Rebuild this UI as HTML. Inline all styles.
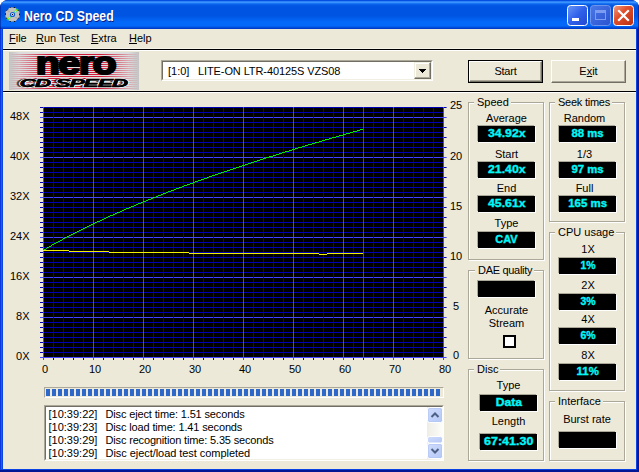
<!DOCTYPE html>
<html><head><meta charset="utf-8"><title>Nero CD Speed</title>
<style>
html,body{margin:0;padding:0;background:#fff;}
body{width:639px;height:472px;overflow:hidden;position:relative;font-family:"Liberation Sans",sans-serif;font-size:11px;color:#000;}
.win{position:absolute;left:0;top:0;width:639px;height:472px;background:#001694;border-radius:8px 8px 0 0;overflow:hidden;}
.title{position:absolute;left:0;top:0;width:639px;height:29px;background:linear-gradient(180deg,#0044da 0,#0a5ce6 1px,#3a92ff 1.7px,#3a92ff 2.6px,#1470f2 3.6px,#0459e4 5px,#0054e2 7px,#0054e2 16px,#0360f0 19px,#0468f8 22px,#0468f8 25.5px,#0058e6 27px,#0040d0 28px,#0036c4 29px);}
.title .cap{position:absolute;left:24px;top:8px;font-weight:bold;font-size:14px;line-height:16px;color:#fff;text-shadow:1px 1px 0 #0a1883;white-space:nowrap;transform-origin:0 0;transform:scaleX(0.88);}
.client{position:absolute;left:3px;top:29px;width:633px;height:440px;background:#ece9d8;}
.bl{position:absolute;left:0;top:29px;width:3px;height:441px;background:linear-gradient(90deg,#0a38da 0,#0a38da 1px,#1262ee 1px,#1262ee 2px,#0846e0 2px);}
.br{position:absolute;left:636px;top:29px;width:1px;height:441px;background:#0a44e2;}
.bb{position:absolute;left:1px;top:469px;width:636px;height:1px;background:#0a44e2;}
.abs,.t,.grp,.bx,.chk{position:absolute;}
.t{white-space:nowrap;line-height:13px;height:13px;}
.menu span{position:absolute;top:32px;line-height:13px;white-space:nowrap;}
u{text-decoration:underline;text-underline-offset:1px;}
.hl{position:absolute;left:3px;width:633px;height:1px;}
.graph{position:absolute;left:0;top:95px;}
.yl{left:0;width:29.5px;text-align:right;}
.yr{left:436px;width:40px;text-align:center;}
.xl{top:363px;width:40px;text-align:center;}
.grp{box-sizing:border-box;border:1px solid #aca899;box-shadow:1px 1px 0 #fff, inset 1px 1px 0 #fff;}
.gl{background:#ece9d8;padding:0 2px 0 3px;}
.cl{width:80px;text-align:center;}
.bx{background:#000;color:#00f8f8;-webkit-text-stroke:0.35px #00f8f8;font-weight:bold;font-size:11px;text-align:center;box-shadow:1px 1px 0 #fff,-1px -1px 0 #aca899;white-space:nowrap;}
.bx span{display:inline-block;}
.chk{width:13px;height:13px;box-sizing:border-box;border:2px solid #000;background:#fff;}
.btn{position:absolute;box-sizing:border-box;background:#ece9d8;text-align:center;line-height:13px;}
.prog{position:absolute;left:44px;top:387px;width:400px;height:11px;box-sizing:border-box;border:1px solid;border-color:#aca899 #fff #fff #aca899;}
.prog i{position:absolute;top:1px;width:4px;height:7px;background:#2e68c8;}
.log{position:absolute;left:44px;top:405px;width:400px;height:56px;box-sizing:border-box;background:#fff;border:1px solid;border-color:#aca899 #fff #fff #aca899;}
.log .in{position:absolute;left:0;top:0;right:0;bottom:0;border:1px solid;border-color:#716f64 #f1efe2 #f1efe2 #716f64;}
.log .ln{position:absolute;left:3.5px;white-space:nowrap;line-height:13px;}
.log .ln b{font-weight:normal;position:absolute;left:57px;}
</style></head><body>
<div class="win">
<div class="title">
<svg class="abs" style="left:5px;top:7px" width="15" height="15" viewBox="0 0 15 15">
<polygon points="4.8,0.5 10.2,0.5 14.5,4.8 14.5,10.2 10.2,14.5 4.8,14.5 0.5,10.2 0.5,4.8" fill="#c2c0be"/>
<polygon points="4.8,0.5 10.2,0.5 14.5,4.8 14.5,10.2 10.2,14.5 4.8,14.5 0.5,10.2 0.5,4.8" fill="none" stroke="#111" stroke-width="1" stroke-dasharray="1.6 3.1" stroke-dashoffset="0.8"/>
<path d="M2.300 12.700 L5.800 9.200 M12.700 2.300 L9.200 5.800" stroke="#18d8e0" stroke-width="2.300"/><path d="M2.300 12.700 L5.400 9.600 M12.700 2.300 L9.600 5.400" stroke="#f4f400" stroke-width="1.300"/><path d="M2.100 12.900 L3.300 11.700 M12.900 2.100 L11.700 3.300" stroke="#10d818" stroke-width="1.800"/>
<path d="M3 3.500 L4.500 5 M12 11.500 L10.500 10" stroke="#8a8a88" stroke-width="0.7"/>
<circle cx="7.500" cy="7.500" r="2.600" fill="#0c5ce0"/><circle cx="7.500" cy="7.500" r="1.400" fill="#f4f4f4"/><circle cx="7.500" cy="7.500" r="0.700" fill="#000"/>
</svg>
<div class="abs" style="left:0;top:0;width:1px;height:29px;background:rgba(0,10,120,0.45)"></div><div class="abs" style="left:638px;top:0;width:1px;height:29px;background:rgba(0,10,120,0.55)"></div><div class="cap">Nero CD Speed</div>
<!-- caption buttons -->
<svg class="abs" style="left:566px;top:4px" width="70" height="24" viewBox="0 0 70 24">
<defs>
<linearGradient id="gb" x1="0" y1="0" x2="1" y2="1"><stop offset="0" stop-color="#6a98f8"/><stop offset="0.5" stop-color="#2f60ea"/><stop offset="1" stop-color="#2448d0"/></linearGradient>
<linearGradient id="gd" x1="0" y1="0" x2="1" y2="1"><stop offset="0" stop-color="#4a78e8"/><stop offset="1" stop-color="#2a52d0"/></linearGradient>
<linearGradient id="gr" x1="0" y1="0" x2="1" y2="1"><stop offset="0" stop-color="#f0a088"/><stop offset="0.4" stop-color="#e0502c"/><stop offset="1" stop-color="#b82c10"/></linearGradient>
</defs>
<rect x="1.5" y="1.5" width="20" height="20" rx="3" fill="url(#gb)" stroke="#fff" stroke-width="1"/>
<rect x="6" y="14" width="7" height="3" fill="#fff"/>
<rect x="24.500" y="1.500" width="20" height="20" rx="3" fill="url(#gd)" stroke="#6f94ec" stroke-width="1"/>
<rect x="29.500" y="6.500" width="10" height="9" fill="none" stroke="#7b9cf0" stroke-width="1"/><rect x="29" y="6" width="11" height="3" fill="#7b9cf0"/>
<rect x="47.500" y="1.500" width="20" height="20" rx="3" fill="url(#gr)" stroke="#fff" stroke-width="1"/>
<path d="M53 7 L62 16 M62 7 L53 16" stroke="#fff" stroke-width="2.2" stroke-linecap="square"/>
</svg>
</div>
<div class="bl"></div><div class="br"></div><div class="bb"></div><div class="client"></div>
<div class="menu"><span style="left:9px"><u>F</u>ile</span><span style="left:36px"><u>R</u>un Test</span><span style="left:91px"><u>E</u>xtra</span><span style="left:129px"><u>H</u>elp</span></div>
<div class="hl" style="top:48px;background:#f6f4ea"></div><div class="hl" style="top:49px;background:#000"></div><div class="hl" style="top:50px;background:#fff"></div>
<div class="hl" style="top:91px;background:#000"></div><div class="hl" style="top:92px;background:#fff"></div>

<!-- logo -->
<svg class="abs" style="left:9px;top:52px" width="130" height="38" viewBox="0 0 130 38">
<defs>
<linearGradient id="lg" x1="0" y1="0" x2="1" y2="0"><stop offset="0" stop-color="#c4c4c4"/><stop offset="0.08" stop-color="#dcdcdc"/><stop offset="0.5" stop-color="#e4e0e0"/><stop offset="0.92" stop-color="#dcdcdc"/><stop offset="1" stop-color="#c4c4c4"/></linearGradient>
<linearGradient id="rg" x1="0" y1="0" x2="1" y2="0"><stop offset="0" stop-color="#d01030" stop-opacity="0"/><stop offset="0.3" stop-color="#d01030" stop-opacity="0.95"/><stop offset="0.7" stop-color="#d01030" stop-opacity="0.95"/><stop offset="1" stop-color="#d01030" stop-opacity="0"/></linearGradient>
<pattern id="st" width="130" height="2" patternUnits="userSpaceOnUse"><rect x="0" y="0" width="130" height="1" fill="url(#rg)"/></pattern>
</defs>
<rect width="130" height="38" fill="url(#lg)"/>
<rect x="2" y="1" width="126" height="36" fill="url(#st)" shape-rendering="crispEdges"/>
<g transform="translate(26.8,21.7) scale(1.235,1)"><text x="0" y="0" font-family="Liberation Sans, sans-serif" font-weight="bold" font-size="32" letter-spacing="-1.3" fill="#000" stroke="#000" stroke-width="2" stroke-linejoin="round">nero</text></g>
<defs><pattern id="sk" width="4" height="2" patternUnits="userSpaceOnUse"><rect x="0" y="0" width="4" height="1" fill="#000"/></pattern></defs>
<g transform="translate(10.5,34.500) scale(1.98,1)" font-family="Liberation Sans, sans-serif" font-weight="bold" font-style="italic" font-size="11.500" letter-spacing="-0.55">
<text x="-1.6" y="0" fill="url(#sk)" stroke="url(#sk)" stroke-width="0.8">CD SPEED</text>
<text x="0" y="0" fill="#000" stroke="#fff" stroke-width="1.5" paint-order="stroke" stroke-linejoin="round">CD SPEED</text>
<text x="0" y="0" fill="#000" stroke="#000" stroke-width="0.45">CD SPEED</text>
</g>
</svg>

<!-- combo -->
<div class="abs" style="left:161px;top:60px;width:272px;height:21px;box-sizing:border-box;background:#fff;border:1px solid;border-color:#aca899 #fff #fff #aca899;">
<div class="abs" style="left:0;top:0;right:0;bottom:0;border:1px solid;border-color:#716f64 #f1efe2 #f1efe2 #716f64;"></div>
<div class="t" style="left:6px;top:4px;">[1:0]</div><div class="t" style="left:36px;top:4px;letter-spacing:-0.1px">LITE-ON LTR-40125S VZS08</div>
<div class="abs" style="left:252px;top:1px;width:17px;height:17px;box-sizing:border-box;background:#ece9d8;border:1px solid;border-color:#f1efe2 #716f64 #716f64 #f1efe2;box-shadow:inset -1px -1px 0 #aca899, inset 1px 1px 0 #fff;"></div>
<svg class="abs" style="left:257px;top:8px" width="7" height="4" viewBox="0 0 7 4" shape-rendering="crispEdges"><rect x="0" y="0" width="7" height="1"/><rect x="1" y="1" width="5" height="1"/><rect x="2" y="2" width="3" height="1"/><rect x="3" y="3" width="1" height="1"/></svg>
</div>

<!-- buttons -->
<div class="btn" style="left:468px;top:60px;width:75px;height:23px;border:1px solid #000;"><div class="abs" style="left:0;top:0;right:0;bottom:0;border:1px solid;border-color:#fff #716f64 #716f64 #fff;box-shadow:inset -1px -1px 0 #aca899;"></div><div class="t" style="left:0;right:0;top:4px;text-align:center;letter-spacing:-0.2px">Start</div></div>
<div class="btn" style="left:551px;top:60px;width:75px;height:23px;border:1px solid;border-color:#fff #716f64 #716f64 #fff;box-shadow:inset -1px -1px 0 #aca899;"><div class="t" style="left:0;right:0;top:4px;text-align:center">E<u>x</u>it</div></div>

<svg class="graph" width="460" height="290" viewBox="0 0 460 290" shape-rendering="crispEdges"><rect x="43" y="12" width="401" height="251" fill="#000"/><rect x="40" y="262" width="3" height="1" fill="#4545ff"/><rect x="43" y="262" width="401" height="1" fill="#4545ff"/><rect x="40" y="257" width="3" height="1" fill="#0000b4"/><rect x="43" y="257" width="401" height="1" fill="#0000b4"/><rect x="40" y="252" width="3" height="1" fill="#0000b4"/><rect x="43" y="252" width="401" height="1" fill="#0000b4"/><rect x="40" y="247" width="3" height="1" fill="#0000b4"/><rect x="43" y="247" width="401" height="1" fill="#0000b4"/><rect x="40" y="242" width="3" height="1" fill="#0000b4"/><rect x="43" y="242" width="401" height="1" fill="#0000b4"/><rect x="40" y="237" width="3" height="1" fill="#0000b4"/><rect x="43" y="237" width="401" height="1" fill="#0000b4"/><rect x="40" y="232" width="3" height="1" fill="#0000b4"/><rect x="43" y="232" width="401" height="1" fill="#0000b4"/><rect x="40" y="227" width="3" height="1" fill="#0000b4"/><rect x="43" y="227" width="401" height="1" fill="#0000b4"/><rect x="40" y="222" width="3" height="1" fill="#4545ff"/><rect x="43" y="222" width="401" height="1" fill="#4545ff"/><rect x="40" y="217" width="3" height="1" fill="#0000b4"/><rect x="43" y="217" width="401" height="1" fill="#0000b4"/><rect x="40" y="212" width="3" height="1" fill="#0000b4"/><rect x="43" y="212" width="401" height="1" fill="#0000b4"/><rect x="40" y="207" width="3" height="1" fill="#0000b4"/><rect x="43" y="207" width="401" height="1" fill="#0000b4"/><rect x="40" y="202" width="3" height="1" fill="#0000b4"/><rect x="43" y="202" width="401" height="1" fill="#0000b4"/><rect x="40" y="197" width="3" height="1" fill="#0000b4"/><rect x="43" y="197" width="401" height="1" fill="#0000b4"/><rect x="40" y="192" width="3" height="1" fill="#0000b4"/><rect x="43" y="192" width="401" height="1" fill="#0000b4"/><rect x="40" y="187" width="3" height="1" fill="#0000b4"/><rect x="43" y="187" width="401" height="1" fill="#0000b4"/><rect x="40" y="182" width="3" height="1" fill="#4545ff"/><rect x="43" y="182" width="401" height="1" fill="#4545ff"/><rect x="40" y="177" width="3" height="1" fill="#0000b4"/><rect x="43" y="177" width="401" height="1" fill="#0000b4"/><rect x="40" y="172" width="3" height="1" fill="#0000b4"/><rect x="43" y="172" width="401" height="1" fill="#0000b4"/><rect x="40" y="167" width="3" height="1" fill="#0000b4"/><rect x="43" y="167" width="401" height="1" fill="#0000b4"/><rect x="40" y="162" width="3" height="1" fill="#0000b4"/><rect x="43" y="162" width="401" height="1" fill="#0000b4"/><rect x="40" y="157" width="3" height="1" fill="#0000b4"/><rect x="43" y="157" width="401" height="1" fill="#0000b4"/><rect x="40" y="152" width="3" height="1" fill="#0000b4"/><rect x="43" y="152" width="401" height="1" fill="#0000b4"/><rect x="40" y="147" width="3" height="1" fill="#0000b4"/><rect x="43" y="147" width="401" height="1" fill="#0000b4"/><rect x="40" y="142" width="3" height="1" fill="#4545ff"/><rect x="43" y="142" width="401" height="1" fill="#4545ff"/><rect x="40" y="137" width="3" height="1" fill="#0000b4"/><rect x="43" y="137" width="401" height="1" fill="#0000b4"/><rect x="40" y="132" width="3" height="1" fill="#0000b4"/><rect x="43" y="132" width="401" height="1" fill="#0000b4"/><rect x="40" y="127" width="3" height="1" fill="#0000b4"/><rect x="43" y="127" width="401" height="1" fill="#0000b4"/><rect x="40" y="122" width="3" height="1" fill="#0000b4"/><rect x="43" y="122" width="401" height="1" fill="#0000b4"/><rect x="40" y="117" width="3" height="1" fill="#0000b4"/><rect x="43" y="117" width="401" height="1" fill="#0000b4"/><rect x="40" y="112" width="3" height="1" fill="#0000b4"/><rect x="43" y="112" width="401" height="1" fill="#0000b4"/><rect x="40" y="107" width="3" height="1" fill="#0000b4"/><rect x="43" y="107" width="401" height="1" fill="#0000b4"/><rect x="40" y="102" width="3" height="1" fill="#4545ff"/><rect x="43" y="102" width="401" height="1" fill="#4545ff"/><rect x="40" y="97" width="3" height="1" fill="#0000b4"/><rect x="43" y="97" width="401" height="1" fill="#0000b4"/><rect x="40" y="92" width="3" height="1" fill="#0000b4"/><rect x="43" y="92" width="401" height="1" fill="#0000b4"/><rect x="40" y="87" width="3" height="1" fill="#0000b4"/><rect x="43" y="87" width="401" height="1" fill="#0000b4"/><rect x="40" y="82" width="3" height="1" fill="#0000b4"/><rect x="43" y="82" width="401" height="1" fill="#0000b4"/><rect x="40" y="77" width="3" height="1" fill="#0000b4"/><rect x="43" y="77" width="401" height="1" fill="#0000b4"/><rect x="40" y="72" width="3" height="1" fill="#0000b4"/><rect x="43" y="72" width="401" height="1" fill="#0000b4"/><rect x="40" y="67" width="3" height="1" fill="#0000b4"/><rect x="43" y="67" width="401" height="1" fill="#0000b4"/><rect x="40" y="62" width="3" height="1" fill="#4545ff"/><rect x="43" y="62" width="401" height="1" fill="#4545ff"/><rect x="40" y="57" width="3" height="1" fill="#0000b4"/><rect x="43" y="57" width="401" height="1" fill="#0000b4"/><rect x="40" y="52" width="3" height="1" fill="#0000b4"/><rect x="43" y="52" width="401" height="1" fill="#0000b4"/><rect x="40" y="47" width="3" height="1" fill="#0000b4"/><rect x="43" y="47" width="401" height="1" fill="#0000b4"/><rect x="40" y="42" width="3" height="1" fill="#0000b4"/><rect x="43" y="42" width="401" height="1" fill="#0000b4"/><rect x="40" y="37" width="3" height="1" fill="#0000b4"/><rect x="43" y="37" width="401" height="1" fill="#0000b4"/><rect x="40" y="32" width="3" height="1" fill="#0000b4"/><rect x="43" y="32" width="401" height="1" fill="#0000b4"/><rect x="40" y="27" width="3" height="1" fill="#0000b4"/><rect x="43" y="27" width="401" height="1" fill="#0000b4"/><rect x="40" y="22" width="3" height="1" fill="#4545ff"/><rect x="43" y="22" width="401" height="1" fill="#4545ff"/><rect x="40" y="17" width="3" height="1" fill="#0000b4"/><rect x="43" y="17" width="401" height="1" fill="#0000b4"/><rect x="40" y="12" width="3" height="1" fill="#0000b4"/><rect x="43" y="12" width="401" height="1" fill="#0000b4"/><rect x="43" y="12" width="1" height="253" fill="#4545ff"/><rect x="53" y="12" width="1" height="253" fill="#0000b4"/><rect x="63" y="12" width="1" height="253" fill="#0000b4"/><rect x="73" y="12" width="1" height="253" fill="#0000b4"/><rect x="83" y="12" width="1" height="253" fill="#0000b4"/><rect x="93" y="12" width="1" height="253" fill="#4545ff"/><rect x="103" y="12" width="1" height="253" fill="#0000b4"/><rect x="113" y="12" width="1" height="253" fill="#0000b4"/><rect x="123" y="12" width="1" height="253" fill="#0000b4"/><rect x="133" y="12" width="1" height="253" fill="#0000b4"/><rect x="143" y="12" width="1" height="253" fill="#4545ff"/><rect x="153" y="12" width="1" height="253" fill="#0000b4"/><rect x="163" y="12" width="1" height="253" fill="#0000b4"/><rect x="173" y="12" width="1" height="253" fill="#0000b4"/><rect x="183" y="12" width="1" height="253" fill="#0000b4"/><rect x="193" y="12" width="1" height="253" fill="#4545ff"/><rect x="203" y="12" width="1" height="253" fill="#0000b4"/><rect x="213" y="12" width="1" height="253" fill="#0000b4"/><rect x="223" y="12" width="1" height="253" fill="#0000b4"/><rect x="233" y="12" width="1" height="253" fill="#0000b4"/><rect x="243" y="12" width="1" height="253" fill="#4545ff"/><rect x="253" y="12" width="1" height="253" fill="#0000b4"/><rect x="263" y="12" width="1" height="253" fill="#0000b4"/><rect x="273" y="12" width="1" height="253" fill="#0000b4"/><rect x="283" y="12" width="1" height="253" fill="#0000b4"/><rect x="293" y="12" width="1" height="253" fill="#4545ff"/><rect x="303" y="12" width="1" height="253" fill="#0000b4"/><rect x="313" y="12" width="1" height="253" fill="#0000b4"/><rect x="323" y="12" width="1" height="253" fill="#0000b4"/><rect x="333" y="12" width="1" height="253" fill="#0000b4"/><rect x="343" y="12" width="1" height="253" fill="#4545ff"/><rect x="353" y="12" width="1" height="253" fill="#0000b4"/><rect x="363" y="12" width="1" height="253" fill="#0000b4"/><rect x="373" y="12" width="1" height="253" fill="#0000b4"/><rect x="383" y="12" width="1" height="253" fill="#0000b4"/><rect x="393" y="12" width="1" height="253" fill="#4545ff"/><rect x="403" y="12" width="1" height="253" fill="#0000b4"/><rect x="413" y="12" width="1" height="253" fill="#0000b4"/><rect x="423" y="12" width="1" height="253" fill="#0000b4"/><rect x="433" y="12" width="1" height="253" fill="#0000b4"/><rect x="443" y="12" width="1" height="253" fill="#4545ff"/><rect x="444" y="262" width="2.6" height="1" fill="#4545ff" shape-rendering="auto"/><rect x="444" y="252" width="2.6" height="1" fill="#0000b4" shape-rendering="auto"/><rect x="444" y="242" width="2.6" height="1" fill="#0000b4" shape-rendering="auto"/><rect x="444" y="232" width="2.6" height="1" fill="#0000b4" shape-rendering="auto"/><rect x="444" y="222" width="2.6" height="1" fill="#4545ff" shape-rendering="auto"/><rect x="444" y="212" width="2.6" height="1" fill="#0000b4" shape-rendering="auto"/><rect x="444" y="202" width="2.6" height="1" fill="#0000b4" shape-rendering="auto"/><rect x="444" y="192" width="2.6" height="1" fill="#0000b4" shape-rendering="auto"/><rect x="444" y="182" width="2.6" height="1" fill="#4545ff" shape-rendering="auto"/><rect x="444" y="172" width="2.6" height="1" fill="#0000b4" shape-rendering="auto"/><rect x="444" y="162" width="2.6" height="1" fill="#0000b4" shape-rendering="auto"/><rect x="444" y="152" width="2.6" height="1" fill="#0000b4" shape-rendering="auto"/><rect x="444" y="142" width="2.6" height="1" fill="#4545ff" shape-rendering="auto"/><rect x="444" y="132" width="2.6" height="1" fill="#0000b4" shape-rendering="auto"/><rect x="444" y="122" width="2.6" height="1" fill="#0000b4" shape-rendering="auto"/><rect x="444" y="112" width="2.6" height="1" fill="#0000b4" shape-rendering="auto"/><rect x="444" y="102" width="2.6" height="1" fill="#4545ff" shape-rendering="auto"/><rect x="444" y="92" width="2.6" height="1" fill="#0000b4" shape-rendering="auto"/><rect x="444" y="82" width="2.6" height="1" fill="#0000b4" shape-rendering="auto"/><rect x="444" y="72" width="2.6" height="1" fill="#0000b4" shape-rendering="auto"/><rect x="444" y="62" width="2.6" height="1" fill="#4545ff" shape-rendering="auto"/><rect x="444" y="52" width="2.6" height="1" fill="#0000b4" shape-rendering="auto"/><rect x="444" y="42" width="2.6" height="1" fill="#0000b4" shape-rendering="auto"/><rect x="444" y="32" width="2.6" height="1" fill="#0000b4" shape-rendering="auto"/><rect x="444" y="22" width="2.6" height="1" fill="#4545ff" shape-rendering="auto"/><rect x="444" y="12" width="2.6" height="1" fill="#0000b4" shape-rendering="auto"/><rect x="43" y="12" width="1" height="251" fill="#4545ff"/><rect x="443" y="12" width="1" height="251" fill="#4545ff"/><rect x="43" y="262" width="401" height="1" fill="#4545ff"/><path d="M43 155h1v1h-1zM44 154h2v1h-2zM46 153h1v1h-1zM47 152h2v1h-2zM49 151h2v1h-2zM51 150h1v1h-1zM52 149h2v1h-2zM54 148h2v1h-2zM56 147h2v1h-2zM58 146h2v1h-2zM60 145h2v1h-2zM62 144h1v1h-1zM63 143h2v1h-2zM65 142h2v1h-2zM67 141h2v1h-2zM69 140h2v1h-2zM71 139h2v1h-2zM73 138h2v1h-2zM75 137h2v1h-2zM77 136h2v1h-2zM79 135h2v1h-2zM81 134h2v1h-2zM83 133h2v1h-2zM85 132h2v1h-2zM87 131h2v1h-2zM89 130h2v1h-2zM91 129h2v1h-2zM93 128h2v1h-2zM95 127h2v1h-2zM97 126h3v1h-3zM100 125h2v1h-2zM102 124h2v1h-2zM104 123h2v1h-2zM106 122h2v1h-2zM108 121h2v1h-2zM110 120h3v1h-3zM113 119h2v1h-2zM115 118h2v1h-2zM117 117h3v1h-3zM120 116h2v1h-2zM122 115h2v1h-2zM124 114h2v1h-2zM126 113h3v1h-3zM129 112h2v1h-2zM131 111h3v1h-3zM134 110h2v1h-2zM136 109h2v1h-2zM138 108h3v1h-3zM141 107h2v1h-2zM143 106h3v1h-3zM146 105h2v1h-2zM148 104h3v1h-3zM151 103h2v1h-2zM153 102h3v1h-3zM156 101h2v1h-2zM158 100h3v1h-3zM161 99h2v1h-2zM163 98h3v1h-3zM166 97h2v1h-2zM168 96h3v1h-3zM171 95h3v1h-3zM174 94h2v1h-2zM176 93h3v1h-3zM179 92h3v1h-3zM182 91h2v1h-2zM184 90h3v1h-3zM187 89h3v1h-3zM190 88h3v1h-3zM193 87h2v1h-2zM195 86h3v1h-3zM198 85h3v1h-3zM201 84h3v1h-3zM204 83h3v1h-3zM207 82h2v1h-2zM209 81h3v1h-3zM212 80h3v1h-3zM215 79h3v1h-3zM218 78h3v1h-3zM221 77h3v1h-3zM224 76h3v1h-3zM227 75h3v1h-3zM230 74h3v1h-3zM233 73h3v1h-3zM236 72h3v1h-3zM239 71h3v1h-3zM242 70h3v1h-3zM245 69h3v1h-3zM248 68h3v1h-3zM251 67h3v1h-3zM254 66h3v1h-3zM257 65h3v1h-3zM260 64h3v1h-3zM263 63h3v1h-3zM266 62h3v1h-3zM269 61h4v1h-4zM273 60h3v1h-3zM276 59h3v1h-3zM279 58h3v1h-3zM282 57h3v1h-3zM285 56h4v1h-4zM289 55h3v1h-3zM292 54h3v1h-3zM295 53h3v1h-3zM298 52h4v1h-4zM302 51h3v1h-3zM305 50h3v1h-3zM308 49h4v1h-4zM312 48h3v1h-3zM315 47h4v1h-4zM319 46h3v1h-3zM322 45h3v1h-3zM325 44h4v1h-4zM329 43h3v1h-3zM332 42h4v1h-4zM336 41h3v1h-3zM339 40h4v1h-4zM343 39h3v1h-3zM346 38h4v1h-4zM350 37h3v1h-3zM353 36h4v1h-4zM357 35h3v1h-3zM360 34h4v1h-4z" fill="#00ee00"/><rect x="43" y="155" width="26" height="1" fill="#f0f000"/><rect x="69" y="156" width="40" height="1" fill="#f0f000"/><rect x="109" y="157" width="80" height="1" fill="#f0f000"/><rect x="189" y="158" width="130" height="1" fill="#f0f000"/><rect x="319" y="159" width="8" height="1" fill="#f0f000"/><rect x="327" y="158" width="36" height="1" fill="#f0f000"/><rect x="363" y="12" width="1" height="251" fill="#f80808"/></svg>
<div class="t yl" style="top:350px">0X</div><div class="t yl" style="top:310px">8X</div><div class="t yl" style="top:270px">16X</div><div class="t yl" style="top:230px">24X</div><div class="t yl" style="top:190px">32X</div><div class="t yl" style="top:150px">40X</div><div class="t yl" style="top:110px">48X</div><div class="t yr" style="top:349px">0</div><div class="t yr" style="top:300px">5</div><div class="t yr" style="top:250px">10</div><div class="t yr" style="top:200px">15</div><div class="t yr" style="top:150px">20</div><div class="t yr" style="top:99px">25</div><div class="t xl" style="left:25px">0</div><div class="t xl" style="left:75px">10</div><div class="t xl" style="left:125px">20</div><div class="t xl" style="left:175px">30</div><div class="t xl" style="left:225px">40</div><div class="t xl" style="left:275px">50</div><div class="t xl" style="left:325px">60</div><div class="t xl" style="left:375px">70</div><div class="t xl" style="left:425px">80</div>

<div class="prog"><i style="left:1px"></i><i style="left:7px"></i><i style="left:13px"></i><i style="left:19px"></i><i style="left:25px"></i><i style="left:31px"></i><i style="left:37px"></i><i style="left:43px"></i><i style="left:49px"></i><i style="left:55px"></i><i style="left:61px"></i><i style="left:67px"></i><i style="left:73px"></i><i style="left:79px"></i><i style="left:85px"></i><i style="left:91px"></i><i style="left:97px"></i><i style="left:103px"></i><i style="left:109px"></i><i style="left:115px"></i><i style="left:121px"></i><i style="left:127px"></i><i style="left:133px"></i><i style="left:139px"></i><i style="left:145px"></i><i style="left:151px"></i><i style="left:157px"></i><i style="left:163px"></i><i style="left:169px"></i><i style="left:175px"></i><i style="left:181px"></i><i style="left:187px"></i><i style="left:193px"></i><i style="left:199px"></i><i style="left:205px"></i><i style="left:211px"></i><i style="left:217px"></i><i style="left:223px"></i><i style="left:229px"></i><i style="left:235px"></i><i style="left:241px"></i><i style="left:247px"></i><i style="left:253px"></i><i style="left:259px"></i><i style="left:265px"></i><i style="left:271px"></i><i style="left:277px"></i><i style="left:283px"></i><i style="left:289px"></i><i style="left:295px"></i><i style="left:301px"></i><i style="left:307px"></i><i style="left:313px"></i><i style="left:319px"></i><i style="left:325px"></i><i style="left:331px"></i><i style="left:337px"></i><i style="left:343px"></i><i style="left:349px"></i><i style="left:355px"></i><i style="left:361px"></i><i style="left:367px"></i><i style="left:373px"></i><i style="left:379px"></i><i style="left:385px"></i><i style="left:391px"></i></div>
<div class="log"><div class="in"></div>
<div class="ln" style="top:2px">[10:39:22]<b style="letter-spacing:-0.14px">Disc eject time: 1.51 seconds</b></div>
<div class="ln" style="top:15px">[10:39:23]<b style="letter-spacing:-0.14px">Disc load time: 1.41 seconds</b></div>
<div class="ln" style="top:28px">[10:39:29]<b style="letter-spacing:-0.16px">Disc recognition time: 5.35 seconds</b></div>
<div class="ln" style="top:41px">[10:39:29]<b style="letter-spacing:-0.05px">Disc eject/load test completed</b></div>
<svg class="abs" style="left:381.5px;top:1px" width="16" height="53" viewBox="0 0 16 53">
<defs><linearGradient id="tr" x1="0" y1="0" x2="1" y2="0"><stop offset="0" stop-color="#eeede5"/><stop offset="1" stop-color="#fefefb"/></linearGradient>
<linearGradient id="sb" x1="0" y1="0" x2="1" y2="1"><stop offset="0" stop-color="#d0dcfc"/><stop offset="1" stop-color="#b4c8f6"/></linearGradient></defs>
<rect width="16.5" height="53" fill="url(#tr)"/>
<rect x="0.500" y="0.500" width="15" height="15" rx="2" fill="url(#sb)" stroke="#fff"/><rect x="1.500" y="1.500" width="13" height="13" rx="1.500" fill="none" stroke="#b0c4f4" stroke-width="0.6"/>
<path d="M4.500 10 L8 6.500 L11.500 10" fill="none" stroke="#4d6185" stroke-width="2"/>
<rect x="0.500" y="29.500" width="15" height="6.500" rx="2" fill="url(#sb)" stroke="#fff"/>
<rect x="0.500" y="36.500" width="15" height="15" rx="2" fill="url(#sb)" stroke="#fff"/><rect x="1.500" y="37.500" width="13" height="13" rx="1.500" fill="none" stroke="#b0c4f4" stroke-width="0.6"/>
<path d="M4.500 42 L8 45.500 L11.500 42" fill="none" stroke="#4d6185" stroke-width="2"/>
</svg>
</div>

<div class="grp" style="left:468px;top:102px;width:76px;height:158px"></div><div class="t gl" style="left:474px;top:96px;">Speed</div><div class="t cl" style="left:466.5px;top:112px">Average</div><div class="bx" style="left:478px;top:126px;width:57px;height:16px;line-height:15px;"><span style="transform:scaleX(1.12)">34.92x</span></div><div class="t cl" style="left:466.5px;top:148px">Start</div><div class="bx" style="left:478px;top:162px;width:57px;height:16px;line-height:15px;"><span style="transform:scaleX(1.12)">21.40x</span></div><div class="t cl" style="left:466.5px;top:182px">End</div><div class="bx" style="left:478px;top:196px;width:57px;height:16px;line-height:15px;"><span style="transform:scaleX(1.12)">45.61x</span></div><div class="t cl" style="left:466.5px;top:217px">Type</div><div class="bx" style="left:478px;top:232px;width:57px;height:16px;line-height:15px;"><span style="transform:scaleX(1.0)">CAV</span></div><div class="grp" style="left:549px;top:102px;width:76px;height:120px"></div><div class="t gl" style="left:555px;top:96px;letter-spacing:-0.25px;">Seek times</div><div class="t cl" style="left:544.5px;top:112px">Random</div><div class="bx" style="left:559px;top:126px;width:57px;height:16px;line-height:15px;"><span style="transform:scaleX(1.03)">88 ms</span></div><div class="t cl" style="left:544.5px;top:148px">1/3</div><div class="bx" style="left:559px;top:162px;width:57px;height:16px;line-height:15px;"><span style="transform:scaleX(1.03)">97 ms</span></div><div class="t cl" style="left:544.5px;top:182px">Full</div><div class="bx" style="left:559px;top:196px;width:57px;height:16px;line-height:15px;"><span style="transform:scaleX(1.04)">165 ms</span></div><div class="grp" style="left:549px;top:232px;width:76px;height:159px"></div><div class="t gl" style="left:555px;top:226px;">CPU usage</div><div class="t cl" style="left:548.0px;top:243px">1X</div><div class="bx" style="left:559px;top:258px;width:57px;height:16px;line-height:15px;"><span style="transform:scaleX(0.95)">1%</span></div><div class="t cl" style="left:548.0px;top:279px">2X</div><div class="bx" style="left:559px;top:294px;width:57px;height:16px;line-height:15px;"><span style="transform:scaleX(0.95)">3%</span></div><div class="t cl" style="left:548.0px;top:313px">4X</div><div class="bx" style="left:559px;top:328px;width:57px;height:16px;line-height:15px;"><span style="transform:scaleX(0.95)">6%</span></div><div class="t cl" style="left:548.0px;top:349px">8X</div><div class="bx" style="left:559px;top:364px;width:57px;height:16px;line-height:15px;"><span style="transform:scaleX(1.04)">11%</span></div><div class="grp" style="left:468px;top:270px;width:76px;height:89px"></div><div class="t gl" style="left:475px;top:264px;letter-spacing:-0.3px;">DAE quality</div><div class="bx" style="left:478px;top:281px;width:57px;height:16px;line-height:15px;"></div><div class="t cl" style="left:466.5px;top:304px">Accurate</div><div class="t cl" style="left:466.5px;top:317px">Stream</div><div class="chk" style="left:503px;top:335px"></div><div class="grp" style="left:468px;top:369px;width:76px;height:92px"></div><div class="t gl" style="left:474px;top:363px;">Disc</div><div class="t cl" style="left:468.5px;top:379px">Type</div><div class="bx" style="left:480px;top:395px;width:57px;height:16px;line-height:15px;"><span style="transform:scaleX(1.1)">Data</span></div><div class="t cl" style="left:468.5px;top:415px">Length</div><div class="bx" style="left:480px;top:434px;width:57px;height:16px;line-height:15px;"><span style="transform:scaleX(1.135)">67:41.30</span></div><div class="grp" style="left:549px;top:401px;width:76px;height:60px"></div><div class="t gl" style="left:555px;top:395px;">Interface</div><div class="t cl" style="left:547.0px;top:413px">Burst rate</div><div class="bx" style="left:559px;top:432px;width:57px;height:16px;line-height:15px;"></div>
</div>
</body></html>
